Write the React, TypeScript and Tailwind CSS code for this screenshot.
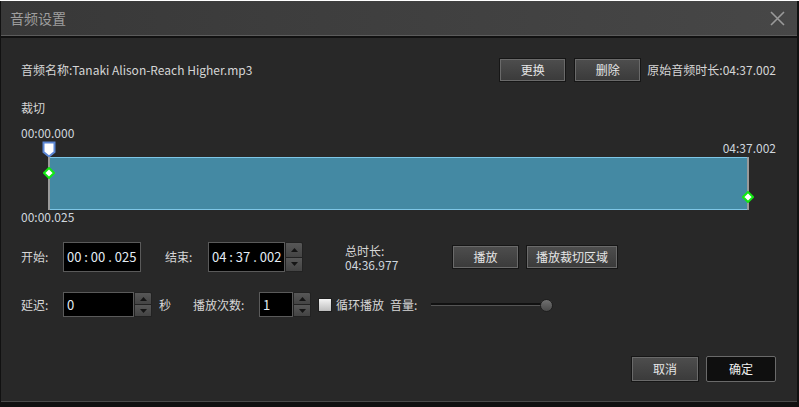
import React from "react";

const font = { fontFamily: '"Noto Sans CJK SC", "Noto Sans", sans-serif' };

const Btn = ({ label, w, h = 24 }: { label: string; w: number; h?: number }) => (
  <button
    className="flex shrink-0 items-center justify-center border border-[#161616] bg-gradient-to-b from-[#4e4e4e] to-[#3a3a3a] text-[12px] text-[#e6e6e6] shadow-[inset_0_0_0_1px_#6a6a6a]"
    style={{ width: w, height: h }}
  >
    {label}
  </button>
);

const Spin = ({ h }: { h: number }) => (
  <div className="flex w-[18px] shrink-0 flex-col" style={{ height: h }}>
    <div className="flex flex-1 items-center justify-center rounded-tr-[2px] border border-[#222] bg-gradient-to-b from-[#575757] to-[#444]">
      <svg width="7" height="4" viewBox="0 0 7 4">
        <path d="M3.5 0L7 4H0z" fill="#151515" />
      </svg>
    </div>
    <div className="flex flex-1 items-center justify-center rounded-br-[2px] border border-t-0 border-[#222] bg-gradient-to-b from-[#575757] to-[#444]">
      <svg width="7" height="4" viewBox="0 0 7 4">
        <path d="M0 0H7L3.5 4z" fill="#151515" />
      </svg>
    </div>
  </div>
);

const Field = ({ value, w, h, spin }: { value: string; w: number; h: number; spin?: boolean }) => (
  <div className="flex shrink-0">
    <div
      className="flex shrink-0 items-center border border-[#5a5a5a] bg-black pl-[3px] text-[13px] whitespace-pre text-[#e4ecf4]"
      style={{ width: w, height: h }}
    >
      {value}
    </div>
    {spin && <Spin h={h} />}
  </div>
);

const Diamond = () => (
  <svg width="12" height="12" viewBox="0 0 12 12">
    <path d="M6 1L11 6L6 11L1 6z" fill="#fff" stroke="#12e812" strokeWidth="2" />
  </svg>
);

export default function App() {
  return (
    <div className="h-[407px] w-[799px] bg-[#111]" style={font}>
      <div className="ml-[1px] mt-[1px] flex h-[401px] w-[796px] flex-col border-b border-[#4a4a4a] bg-[#282828]">
        {/* title bar */}
        <div className="flex h-[35px] shrink-0 items-center justify-between border-b border-[#5c5c5c] bg-gradient-to-r from-[#383838] to-[#474747] pl-[9px] pr-[12px]">
          <span className="text-[14px] text-[#9e9e9e]">音频设置</span>
          <svg width="15" height="15" viewBox="0 0 15 15">
            <path d="M1 1L14 14M14 1L1 14" stroke="#9a9a9a" strokeWidth="1.6" />
          </svg>
        </div>
        <div className="h-[2px] shrink-0 bg-[#111]" />

        <div className="flex flex-col pl-[20px] pr-[21px] text-[12px] text-[#d6d6d6]">
          {/* file row */}
          <div className="mt-[20px] flex h-[24px] items-center">
            <span className="flex-1">音频名称:Tanaki Alison-Reach Higher.mp3</span>
            <div className="flex items-center gap-[8px]">
              <Btn label="更换" w={67} />
              <Btn label="删除" w={67} />
            </div>
            <span className="ml-[6px]">原始音频时长:04:37.002</span>
          </div>

          <div className="mt-[18px] leading-[16px]">裁切</div>
          <div className="mt-[9px] leading-[16px] text-[#cfd6de]">00:00.000</div>

          {/* timeline */}
          <div className="flex h-[16px] items-start justify-between">
            <svg className="ml-[21px]" width="14" height="17" viewBox="0 0 14 17">
              <path d="M1.5 1.5H12.5V11L7 15.5L1.5 11z" fill="#fff" stroke="#5b86d4" strokeWidth="2" />
            </svg>
            <span className="leading-[14px] text-[#cfd6de]">04:37.002</span>
          </div>
          <div className="relative ml-[27px] h-[53px] w-[701px] border-x-2 border-x-[#9a9a9a]">
            <div className="h-full border-y border-y-[#7ec6e6] bg-[#4489a3]" />
            <div className="absolute left-[-7px] top-[10px]">
              <Diamond />
            </div>
            <div className="absolute right-[-7px] top-[34px]">
              <Diamond />
            </div>
          </div>
          <div className="leading-[14px] text-[#cfd6de]">00:00.025</div>

          {/* start / end row */}
          <div className="mt-[18px] flex h-[30px] items-center">
            <span className="w-[42px] shrink-0">开始:</span>
            <Field value="00 : 00 . 025" w={78} h={30} />
            <span className="ml-[24px] w-[43px] shrink-0">结束:</span>
            <Field value="04 : 37 . 002" w={77} h={30} spin />
            <div className="ml-[42px] flex w-[107px] shrink-0 flex-col gap-[1px] leading-[13px]">
              <span>总时长:</span>
              <span className="text-[#cfd6de]">04:36.977</span>
            </div>
            <Btn label="播放" w={67} />
            <div className="ml-[7px]">
              <Btn label="播放裁切区域" w={92} />
            </div>
          </div>

          {/* delay row */}
          <div className="mt-[20px] flex h-[25px] items-center">
            <span className="w-[42px] shrink-0">延迟:</span>
            <Field value="0" w={71} h={25} spin />
            <span className="ml-[7px] w-[34px] shrink-0">秒</span>
            <span className="w-[66px] shrink-0">播放次数:</span>
            <Field value="1" w={34} h={25} spin />
            <div className="ml-[7px] h-[14px] w-[14px] shrink-0 border border-[#1e1e1e] bg-gradient-to-b from-[#f4f4f4] to-[#bdbdbd]" />
            <span className="ml-[4px] shrink-0">循环播放</span>
            <span className="ml-[6px] shrink-0">音量:</span>
            <div className="relative ml-[14px] flex h-[14px] w-[122px] shrink-0 items-center">
              <div className="h-[3px] w-[116px] border-b border-[#555] bg-[#111]" />
              <div className="absolute left-[109px] top-[1px] h-[13px] w-[13px] rounded-full border border-[#1f1f1f] bg-gradient-to-b from-[#707070] to-[#4a4a4a]" />
            </div>
          </div>

          {/* footer */}
          <div className="mt-[39px] flex justify-end gap-[7px]">
            <Btn label="取消" w={68} h={26} />
            <button className="flex h-[26px] w-[70px] items-center justify-center rounded-[2px] border border-[#6a6a6a] bg-[#0f0f0f] text-[12px] text-[#f0f0f0]">
              确定
            </button>
          </div>
        </div>
      </div>
    </div>
  );
}
